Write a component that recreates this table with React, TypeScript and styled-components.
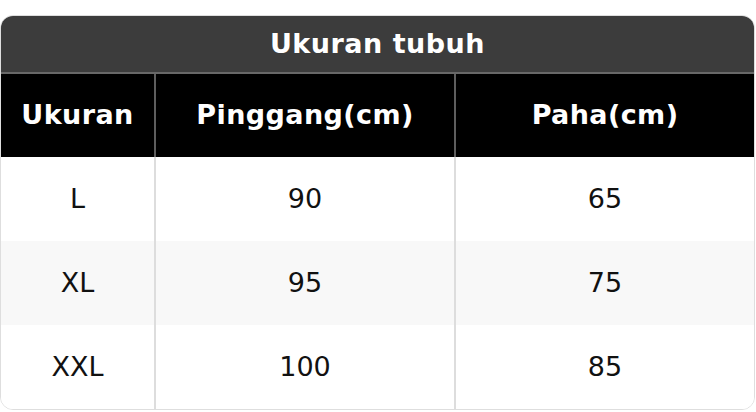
import styled, { createGlobalStyle } from 'styled-components';

const GlobalStyle = createGlobalStyle`
  html, body {
    margin: 0;
    padding: 0;
    background: #ffffff;
    font-family: 'DejaVu Sans', Verdana, sans-serif;
  }
`;

const Page = styled.main`
  padding-top: 15px;
  width: 756px;
`;

const Card = styled.section`
  width: 755px;
  border: 1px solid #dedede;
  border-radius: 13px;
  overflow: hidden;
  box-sizing: border-box;
`;

const Title = styled.h2`
  margin: 0;
  height: 58px;
  box-sizing: border-box;
  padding-bottom: 2px;
  display: flex;
  align-items: center;
  justify-content: center;
  background: #3c3c3c;
  color: #ffffff;
  font-size: 27px;
  font-weight: 700;
  letter-spacing: 0.5px;
  border-bottom: 2px solid #686868;
`;

const Row = styled.div<{ $head?: boolean; $striped?: boolean }>`
  display: grid;
  grid-template-columns: 155px 300px 1fr;
  height: ${({ $head }) => ($head ? '83px' : '84px')};
  margin: ${({ $head }) => ($head ? '0 -1px' : '0')};
  border: 0 solid #5e5e5e;
  border-width: ${({ $head }) => ($head ? '0 1px' : '0')};
  background: ${({ $head, $striped }) =>
    $head ? '#000000' : $striped ? '#f8f8f8' : '#ffffff'};
  color: ${({ $head }) => ($head ? '#ffffff' : '#111111')};
  font-weight: ${({ $head }) => ($head ? 700 : 400)};
`;

const Cell = styled.div<{ $head?: boolean }>`
  display: flex;
  align-items: center;
  justify-content: center;
  padding-bottom: 2px;
  font-size: 27px;
  letter-spacing: ${({ $head }) => ($head ? '0.4px' : '0')};
  border-right: 2px solid ${({ $head }) => ($head ? '#5e5e5e' : '#dddddd')};

  &:last-child {
    border-right: none;
  }
`;

const sizes = [
  { size: 'L', waist: 90, thigh: 65 },
  { size: 'XL', waist: 95, thigh: 75 },
  { size: 'XXL', waist: 100, thigh: 85 },
];

export default function App() {
  return (
    <Page>
      <GlobalStyle />
      <Card>
        <Title>Ukuran tubuh</Title>
        <Row $head>
          <Cell $head>Ukuran</Cell>
          <Cell $head>Pinggang(cm)</Cell>
          <Cell $head>Paha(cm)</Cell>
        </Row>
        {sizes.map((s, i) => (
          <Row key={s.size} $striped={i % 2 === 1}>
            <Cell>{s.size}</Cell>
            <Cell>{s.waist}</Cell>
            <Cell>{s.thigh}</Cell>
          </Row>
        ))}
      </Card>
    </Page>
  );
}
